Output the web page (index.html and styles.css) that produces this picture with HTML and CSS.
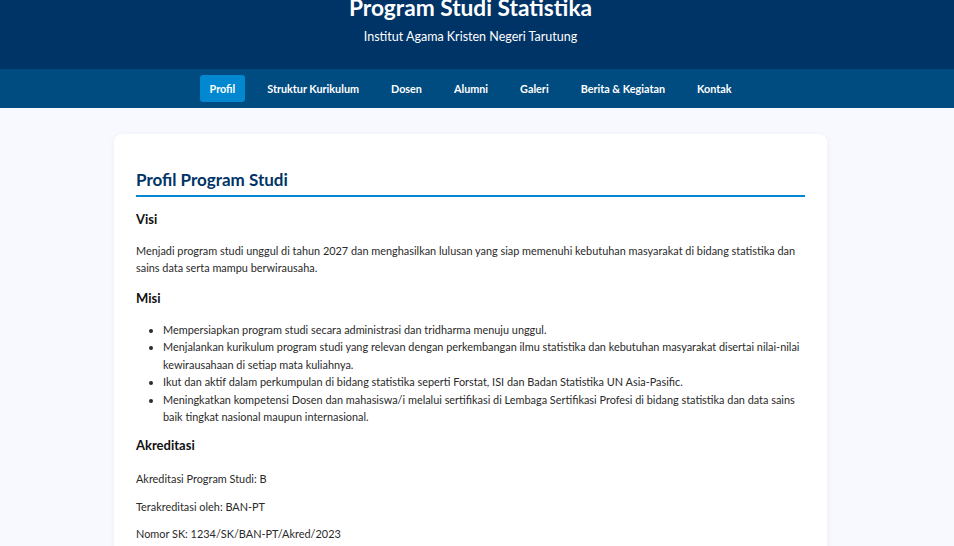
FILE: index.html
```html
<!DOCTYPE html>
<html lang="id">
<head>
<meta charset="utf-8">
<title>Program Studi Statistika</title>
<link rel="stylesheet" href="styles.css">
</head>
<body>
<header class="site-header">
  <h1 class="site-title">Program Studi Statistika</h1>
  <p class="site-subtitle">Institut Agama Kristen Negeri Tarutung</p>
</header>
<nav class="site-nav">
  <ul class="nav-list">
    <li><a class="nav-link active" href="#">Profil</a></li>
    <li><a class="nav-link" href="#">Struktur Kurikulum</a></li>
    <li><a class="nav-link" href="#">Dosen</a></li>
    <li><a class="nav-link" href="#">Alumni</a></li>
    <li><a class="nav-link" href="#">Galeri</a></li>
    <li><a class="nav-link" href="#">Berita &amp; Kegiatan</a></li>
    <li><a class="nav-link" href="#">Kontak</a></li>
  </ul>
</nav>
<main class="main">
  <section class="card">
    <h2 class="card-title">Profil Program Studi</h2>
    <h3 class="section-title">Visi</h3>
    <p class="text">Menjadi program studi unggul di tahun 2027 dan menghasilkan lulusan yang siap memenuhi kebutuhan masyarakat di bidang statistika dan sains data serta mampu berwirausaha.</p>
    <h3 class="section-title">Misi</h3>
    <ul class="mission-list">
      <li>Mempersiapkan program studi secara administrasi dan tridharma menuju unggul.</li>
      <li>Menjalankan kurikulum program studi yang relevan dengan perkembangan ilmu statistika dan kebutuhan masyarakat disertai nilai-nilai kewirausahaan di setiap mata kuliahnya.</li>
      <li>Ikut dan aktif dalam perkumpulan di bidang statistika seperti Forstat, ISI dan Badan Statistika UN Asia-Pasific.</li>
      <li>Meningkatkan kompetensi Dosen dan mahasiswa/i melalui sertifikasi di Lembaga Sertifikasi Profesi di bidang statistika dan data sains baik tingkat nasional maupun internasional.</li>
    </ul>
    <h3 class="section-title section-title--akred">Akreditasi</h3>
    <p class="text">Akreditasi Program Studi: B</p>
    <p class="text">Terakreditasi oleh: BAN-PT</p>
    <p class="text">Nomor SK: 1234/SK/BAN-PT/Akred/2023</p>
  </section>
</main>
</body>
</html>
```
FILE: styles.css
```css
* { box-sizing: border-box; }
html, body { margin: 0; padding: 0; }
body {
  font-family: Lato, "Noto Sans", sans-serif;
  font-size: 10.9px;
  line-height: 1.6;
  color: #2a2a2a;
  background: #f8f9fe;
}
.site-header {
  background: #003366;
  color: #fff;
  text-align: center;
  height: 69px;
  padding-right: 13px;
  overflow: hidden;
}
.site-title {
  margin: -7px 0 0;
  font-size: 22.7px;
  font-weight: 700;
  line-height: 30px;
}
.site-subtitle {
  margin: 5px 0 0;
  font-size: 12.5px;
  line-height: 18px;
  font-weight: 400;
}
.site-nav {
  background: #004b80;
  height: 39px;
  padding-right: 13px;
}
.nav-list {
  list-style: none;
  margin: 0;
  padding: 0;
  height: 100%;
  display: flex;
  justify-content: center;
  align-items: center;
  gap: 12px;
}
.nav-link {
  display: block;
  color: #fff;
  text-decoration: none;
  font-weight: 700;
  font-size: 10.8px;
  line-height: 27px;
  padding: 0 10px;
  border-radius: 3px;
}
.nav-link.active { background: #0288d1; }
.main {
  padding: 26px 13px 40px 0;
  display: flex;
  justify-content: center;
}
.card {
  width: 713px;
  background: #fff;
  border-radius: 8px;
  box-shadow: 0 1px 6px rgba(0, 0, 0, 0.05);
  padding: 34px 22px 20px;
}
.card-title {
  margin: 0 0 12px;
  color: #003366;
  font-size: 17px;
  font-weight: 700;
  line-height: 24px;
  padding-bottom: 3px;
  border-bottom: 2px solid #0288d1;
}
.section-title {
  margin: 11.5px 0 13px;
  font-size: 13px;
  font-weight: 700;
  line-height: 20px;
  color: #111;
}
.card-title + .section-title { margin-top: 0; }
.section-title--akred { margin-top: 9.5px; margin-bottom: 15px; }
.text {
  margin: 10.5px 0;
  line-height: 17px;
}
.section-title + .text { margin-top: 0; }
.mission-list {
  margin: 0 0 8px;
  padding-left: 27px;
  line-height: 17.5px;
}
```
